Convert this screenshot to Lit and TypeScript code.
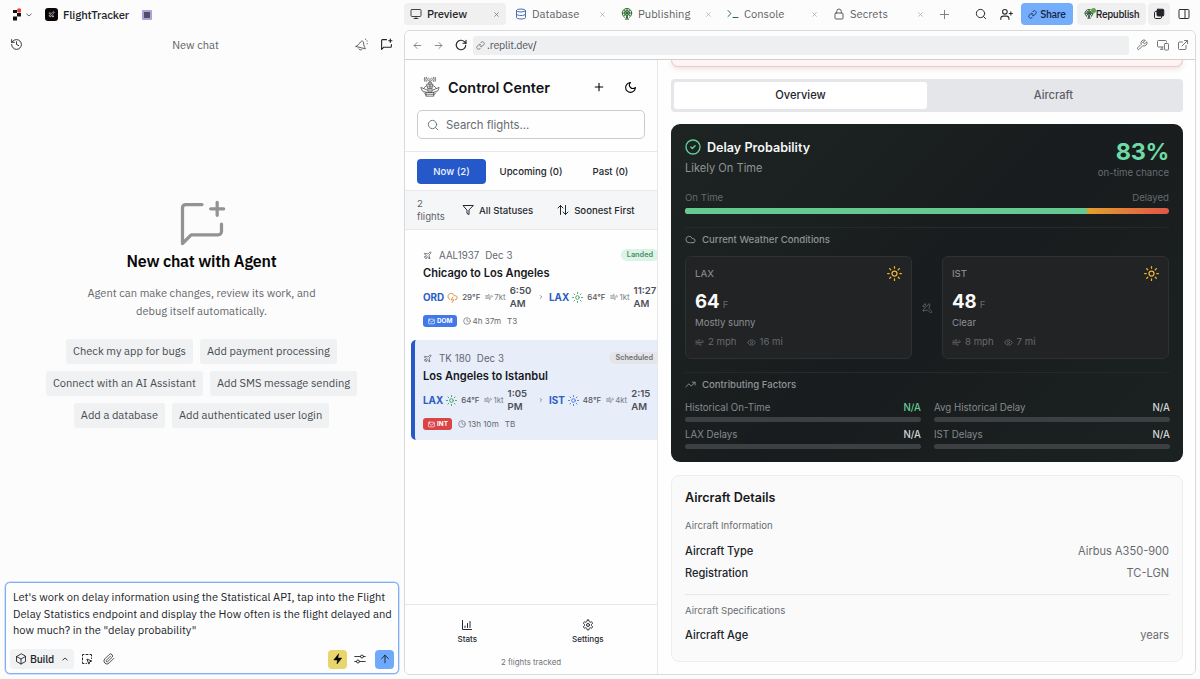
import { LitElement, html, css, svg } from "lit";
import { customElement, property } from "lit/decorators.js";
import { classMap } from "lit/directives/class-map.js";

const PLANE = svg`<path d="M17.8 19.2 16 11l3.5-3.5C21 6 21.5 4 21 3c-1-.5-3 0-4.5 1.5L13 8 4.8 6.2c-.5-.1-.9.1-1.1.5l-.3.5c-.2.5-.1 1 .3 1.3L9 12l-2 3H4l-1 1 3 2 2 3 1-1v-3l3-2 3.5 5.3c.3.4.8.5 1.3.3l.5-.2c.4-.3.6-.7.5-1.2z"/>`;

const ICONS: Record<string, unknown> = {
  plane: PLANE,
  planeTurned: svg`<g transform="rotate(90 12 12)">${PLANE}</g>`,
  chevronDown: svg`<path d="m3 8 9 8 9-8"/>`,
  chevronUp: svg`<path d="m3 16 9-8 9 8"/>`,
  chevronRight: svg`<path d="m9 18 6-6-6-6"/>`,
  history: svg`<path d="M3 12a9 9 0 1 0 9-9 9.75 9.75 0 0 0-6.74 2.74L3 8"/><path d="M3 3v5h5"/><path d="M12 7v5l4 2"/>`,
  bell: svg`<g transform="rotate(14 12 12)"><path d="M3 18h18c-2.500-3-4.500-4.500-6-10-.6-3.200-5.400-3.200-6 0-1.500 5.500-3.500 7-6 10z"/><path d="M9 21c1.500 1.800 4.500 1.800 6 0"/></g><path d="M19.500 2v.8M22.500 5.500h-.8M22.500 10v.8" />`,
  chatPlus: svg`<path d="M12 3H4.500A1.500 1.500 0 0 0 3 4.500V21l4-4h12.500a1.500 1.500 0 0 0 1.500-1.500V12"/><path d="M19 2v6M16 5h6"/>`,
  monitor: svg`<rect x="2" y="3" width="20" height="14" rx="2"/><path d="M8 21h8M12 17v4"/>`,
  x: svg`<path d="M3 3l18 18M21 3 3 21"/>`,
  plus: svg`<path d="M3 12h18M12 3v18"/>`,
  database: svg`<ellipse cx="12" cy="5" rx="9" ry="3"/><path d="M3 5v14c0 1.700 4 3 9 3s9-1.300 9-3V5"/><path d="M3 12c0 1.700 4 3 9 3s9-1.300 9-3"/>`,
  tower: svg`<path d="M7 18.500a9.500 9.500 0 1 1 10 0"/><circle cx="12" cy="10" r="5"/><path d="M12 2v21M2.500 10h19M6 4.500l12 11M18 4.500l-12 11M9.500 23l2.500-7 2.500 7"/>`,
  terminal: svg`<path d="m2 17 6-6-6-6M12 19h10"/>`,
  lock: svg`<rect x="4" y="10" width="16" height="12" rx="2"/><path d="M7.500 10V6.500a4.500 4.500 0 0 1 9 0V10"/>`,
  search: svg`<circle cx="11" cy="11" r="8.300"/><path d="m21.500 21.500-4.500-4.500"/>`,
  userPlus: svg`<circle cx="9" cy="7" r="4.300"/><path d="M1.500 21v-1.500A4.500 4.500 0 0 1 6 15h6a4.500 4.500 0 0 1 4.500 4.500V21M20 7v6M17 10h6"/>`,
  link: svg`<path d="M10 13a5 5 0 0 0 7.540.540l3-3a5 5 0 0 0-7.070-7.070l-1.720 1.710"/><path d="M14 11a5 5 0 0 0-7.540-.540l-3 3a5 5 0 0 0 7.070 7.070l1.710-1.710"/>`,
  copies: svg`<path d="M7 7H5.500A2.500 2.500 0 0 0 3 9.500v9A2.500 2.500 0 0 0 5.500 21h9a2.500 2.500 0 0 0 2.500-2.500V17"/><rect x="8" y="2.500" width="13.500" height="13.500" rx="2" fill="currentColor"/>`,
  panel: svg`<rect x="2" y="3" width="20" height="18" rx="2"/><path d="M14 3v18"/>`,
  back: svg`<path d="M21 12H3m8-8-8 8 8 8"/>`,
  forward: svg`<path d="M3 12h18m-8-8 8 8-8 8"/>`,
  reload: svg`<path d="M21.500 12.500a9.500 9.500 0 1 1-2.800-7.200L22 8.500"/><path d="M22 2.500v6h-6"/>`,
  wrench: svg`<path d="M14.700 6.300a1 1 0 0 0 0 1.400l1.600 1.600a1 1 0 0 0 1.400 0l3.770-3.770a6 6 0 0 1-7.940 7.940l-6.910 6.910a2.120 2.120 0 0 1-3-3l6.910-6.910a6 6 0 0 1 7.940-7.940l-3.760 3.760z"/>`,
  devices: svg`<path d="M12 16H3a2 2 0 0 1-2-2V5a2 2 0 0 1 2-2h14a2 2 0 0 1 2 2v1M7 20.500h5M10 16v4"/><rect x="15" y="9" width="8" height="13" rx="1.500"/>`,
  external: svg`<path d="M15 3h6v6M10 14 21 3M18 13v6a2 2 0 0 1-2 2H5a2 2 0 0 1-2-2V8a2 2 0 0 1 2-2h6"/>`,
  cube: svg`<path d="M12 2 3 7v10l9 5 9-5V7z"/><path d="m3 7 9 5 9-5M12 12v10"/>`,
  select: svg`<path d="M3 6V3h3M18 3h3v3M3 18v3h3M10 3h4M3 10v4M21 10v1M10 21h1"/><path d="m12.500 12.500 9 3.500-4 1.500-1.500 4z"/>`,
  clip: svg`<path d="m21.400 11-9.200 9.200a6 6 0 0 1-8.500-8.500l8.600-8.600a4 4 0 0 1 5.700 5.700l-8.600 8.600a2 2 0 0 1-2.800-2.800l8.500-8.500"/>`,
  bolt: svg`<path fill="currentColor" d="M13 2 3.500 14H11l-1 8 9.500-12H12z"/>`,
  sliders: svg`<path d="M1.500 7H13M19 7h3.500M1.500 17H5M11 17h11.500"/><circle cx="16" cy="7" r="3"/><circle cx="8" cy="17" r="3"/>`,
  up: svg`<path d="M12 21V3m-8 8 8-8 8 8"/>`,
  moon: svg`<path d="M12 3a6 6 0 0 0 9 9 9 9 0 1 1-9-9Z"/>`,
  filter: svg`<path d="M22 3H2l8 9.460V19l4 2v-8.540z"/>`,
  sort: svg`<path d="m2 8 5-5 5 5M7 3v18M12 16l5 5 5-5M17 21V3"/>`,
  storm: svg`<path d="M6 16.300A7 7 0 1 1 15.700 8h1.800a4.500 4.500 0 0 1 .5 9"/><path d="m13 11-4 6h6l-4 6"/>`,
  sun: svg`<circle cx="12" cy="12" r="4"/><path d="M12 1v2.500M12 20.500V23M4.200 4.200 6 6M18 18l1.800 1.800M1 12h2.500M20.500 12H23M6 18l-1.800 1.800M19.800 4.200 18 6"/>`,
  wind: svg`<path d="M12.800 19.600A2 2 0 1 0 14 16H2M17.500 8a2.500 2.500 0 1 1 2 4H2M9.800 4.400A2 2 0 1 1 11 8H2"/>`,
  mail: svg`<rect x="2" y="4" width="20" height="16" rx="2"/><path d="m4 8 8 6 8-6"/>`,
  clock: svg`<circle cx="12" cy="12" r="10"/><path d="M12 6v6l4 2"/>`,
  chart: svg`<path d="M3 3v18h18M8 17v-3M13 17V9M18 17V5"/>`,
  gear: svg`<path d="M12.220 2h-.440a2 2 0 0 0-2 2v.180a2 2 0 0 1-1 1.730l-.430.250a2 2 0 0 1-2 0l-.150-.080a2 2 0 0 0-2.730.730l-.220.380a2 2 0 0 0 .730 2.730l.150.100a2 2 0 0 1 1 1.720v.510a2 2 0 0 1-1 1.740l-.150.090a2 2 0 0 0-.730 2.730l.220.380a2 2 0 0 0 2.730.730l.150-.080a2 2 0 0 1 2 0l.430.250a2 2 0 0 1 1 1.730V20a2 2 0 0 0 2 2h.440a2 2 0 0 0 2-2v-.180a2 2 0 0 1 1-1.730l.430-.250a2 2 0 0 1 2 0l.150.080a2 2 0 0 0 2.730-.730l.220-.390a2 2 0 0 0-.730-2.730l-.150-.080a2 2 0 0 1-1-1.740v-.500a2 2 0 0 1 1-1.740l.150-.090a2 2 0 0 0 .730-2.730l-.220-.380a2 2 0 0 0-2.730-.730l-.150.080a2 2 0 0 1-2 0l-.430-.250a2 2 0 0 1-1-1.730V4a2 2 0 0 0-2-2z"/><circle cx="12" cy="12" r="3"/>`,
  check: svg`<circle cx="12" cy="12" r="10.500"/><path d="m8.800 12 2.200 2.200 4.200-4.200"/>`,
  cloud: svg`<path d="M17.500 19H9a7 7 0 1 1 6.710-9h1.790a4.500 4.500 0 1 1 0 9Z"/>`,
  eye: svg`<path d="M2 12.300a1 1 0 0 1 0-.7 10.750 10.750 0 0 1 20 0 1 1 0 0 1 0 .7 10.750 10.750 0 0 1-20 0"/><circle cx="12" cy="12" r="3"/>`,
  trend: svg`<path d="m22 7-8.500 8.500-5-5L2 17"/><path d="M16 7h6v6"/>`,
  crest: svg`<path d="M8.500 8.500h7l-1.200 5H9.700zM9.700 13.500v5h4.600v-5M10.500 8.500V6h3v2.500M12 6V2M12 9v9M10.300 11h3.400M7.500 18.500h9v4.500h-9zM7.500 20.700h9"/><path d="M8 10.500a7 7 0 0 0-3.500 3M16 10.500a7 7 0 0 1 3.500 3M5 19a8 8 0 0 0 2.500 2.500M19 19a8 8 0 0 1-2.500 2.500M9.500 16 1 12.500l1.500 4L8 18.500M14.500 16l8.500-3.500-1.500 4L16 18.500"/><path d="M9.800 1.200a2.500 2.500 0 0 0 0 3.300M7.800.3a4 4 0 0 0 0 5M5.800.3a5 5 0 0 0 0 5M14.200 1.200a2.500 2.500 0 0 1 0 3.300M16.200.3a4 4 0 0 1 0 5M18.200.3a5 5 0 0 1 0 5"/>`,
};

const icon = (name: string, size: number, stroke = 2, cls = "") => svg`
  <svg class="icon ${cls}" width=${size} height=${size} viewBox="0 0 24 24" fill="none"
    stroke="currentColor" stroke-width=${stroke} stroke-linecap="round" stroke-linejoin="round">${ICONS[name]}</svg>`;

const base = css`
  :host { box-sizing: border-box; }
  *, *::before, *::after { box-sizing: border-box; }
  .icon { display: block; flex: none; overflow: visible; }
`;

@customElement("chat-panel")
class ChatPanel extends LitElement {
  static styles = [base, css`
    :host { display: flex; flex-direction: column; width: 404px; height: 679px; padding: 0 5px 5px;
      font-family: "IBM Plex Sans", "Noto Sans", sans-serif; color: #25272b; }
    .brand { height: 29px; display: flex; align-items: center; padding-left: 7px; }
    .logo { width: 9px; height: 13px; }
    .caret { margin-left: 5px; color: #555; }
    .app { width: 13px; height: 13px; border-radius: 3px; background: #0a0506; color: #e9dcdc;
      display: flex; align-items: center; justify-content: center; margin: 0 5px 0 13px; }
    .name { font-size: 11.300px; font-weight: 500; letter-spacing: -0.150px; width: 79px; white-space: nowrap; }
    .chip { width: 10px; height: 10px; border: 2px solid #aaa2dc; background: #514d69; border-radius: 1px; }
    .head { height: 31px; display: grid; grid-template-columns: 60px 1fr 72px; align-items: center;
      padding: 0 6px 0 5px; font-size: 11.100px; color: #5f6267; text-align: center; }
    .history { color: #333; }
    .actions { display: flex; justify-content: flex-end; gap: 12px; color: #555; }
    .dark { color: #222; }
    .empty { flex: 1; display: flex; flex-direction: column; align-items: center; padding-top: 138px; padding-right: 1px; }
    .big { color: #929394; margin-left: 1px; }
    h1 { margin: 0; font-size: 16px; line-height: 22px; font-weight: 600; letter-spacing: -0.200px; color: #080808; }
    p { margin: 12px 0 0; font-size: 11.100px; line-height: 18px; color: #64676c; text-align: center; width: 246px; }
    .chips { display: flex; flex-wrap: wrap; justify-content: center; gap: 7px; margin-top: 19px; width: 330px; }
    .suggest { height: 25px; padding: 0 7px; border-radius: 3px; background: #f0f1f2; color: #484b50;
      font-size: 11.100px; line-height: 25px; white-space: nowrap; }
    .prompt { height: 92px; width: 394px; border: 1px solid #80aef5; border-radius: 5px; background: #fdfdfd;
      padding: 6px 4px 4px; display: flex; flex-direction: column; justify-content: space-between; box-shadow: 0 0 0 .5px #a9c8f8; }
    .typed { font-size: 11.160px; line-height: 16.500px; color: #222428; padding-left: 3px; white-space: pre; }
    .tools { display: flex; align-items: center; height: 20px; }
    .build { height: 20px; width: 64px; background: #f1f2f4; border-radius: 4px; display: flex; align-items: center;
      padding: 0 6px 0 5px; font-size: 10.500px; font-weight: 500; gap: 3px; letter-spacing: -.2px; }
    .push { margin-left: auto; }
    .sel { margin: 0 10px 0 7px; }
    .sq { width: 19px; height: 19px; border-radius: 4px; display: flex; align-items: center; justify-content: center; }
    .gold { background: #e8d66c; color: #000; margin-left: auto; margin-right: 7px; }
    .blue { background: #6ea9fb; color: #112; margin-left: 9px; }
  `];
  private suggestions = ["Check my app for bugs", "Add payment processing", "Connect with an AI Assistant",
    "Add SMS message sending", "Add a database", "Add authenticated user login"];
  render() {
    return html`
      <div class="brand">
        <svg class="logo" viewBox="0 0 9 13"><path d="M1 2h4v3H1zM5 5h4v3.500H5zM1 8.500h4v4H1z" fill="#111"/><circle cx="7.200" cy="2.500" r="2.200" fill="#e5484d"/></svg>
        <span class="caret">${icon("chevronDown", 6, 3.500)}</span>
        <span class="app">${icon("plane", 7, 2.200)}</span>
        <span class="name">FlightTracker</span><span class="chip"></span>
      </div>
      <div class="head">
        <span class="history">${icon("history", 13, 1.800)}</span><span>New chat</span>
        <span class="actions">${icon("bell", 13, 1.600)}${icon("chatPlus", 13, 2, "dark")}</span>
      </div>
      <div class="empty">
        <span class="big">${icon("chatPlus", 52, 1.500)}</span>
        <h1>New chat with Agent</h1>
        <p>Agent can make changes, review its work, and debug itself automatically.</p>
        <div class="chips">${this.suggestions.map((s) => html`<span class="suggest">${s}</span>`)}</div>
      </div>
      <div class="prompt">
        <div class="typed">${"Let's work on delay information using the Statistical API, tap into the Flight\nDelay Statistics endpoint and display the How often is the flight delayed and\nhow much? in the \"delay probability\""}</div>
        <div class="tools">
          <span class="build">${icon("cube", 12, 1.800)}<span>Build</span><span class="push">${icon("chevronUp", 6, 3.500)}</span></span>
          <span class="sel">${icon("select", 12, 2)}</span>${icon("clip", 12, 1.600)}
          <span class="sq gold">${icon("bolt", 12, 1)}</span>${icon("sliders", 12, 1.800)}
          <span class="sq blue">${icon("up", 10, 2)}</span>
        </div>
      </div>`;
  }
}

@customElement("workspace-tabs")
class WorkspaceTabs extends LitElement {
  static styles = [base, css`
    :host { display: flex; align-items: center; height: 28px; width: 792px; padding-right: 6px; font-family: "IBM Plex Sans", "Noto Sans", sans-serif;
      font-size: 11.200px; color: #5c5f64; }
    .tab { display: flex; align-items: center; width: 106px; height: 22px; padding: 0 11px 0 5px; gap: 5px; border-radius: 4px; flex: none; }
    .on { background: #f0f0f1; color: #26282c; font-weight: 500; width: 102px; margin-right: 4px; padding: 0 7px 0 6px; letter-spacing: -.15px; }
    .close { margin-left: auto; color: #a0a3a7; }
    .on .close { color: #666; }
    .mono { color: #444; } .dbs { color: #4a6fae; } .pub { color: #2d6b35; }
    .add { width: 11px; margin-left: 5px; color: #777; }
    .end { margin-left: auto; display: flex; align-items: center; color: #2c2e33; }
    .btn { height: 22px; border-radius: 4px; display: flex; align-items: center; justify-content: center; font-size: 10.200px;
      font-weight: 500; gap: 3px; background: #f0f0f1; color: #222428; letter-spacing: -0.350px; }
    .share { width: 52px; background: #74adfb; margin: 0 4px 0 8px; color: #14284a; }
    .repub { width: 69px; margin-right: 2px; gap: 2px; }
    .stack { width: 22px; margin-right: 8px; }
    .live { position: relative; display: block; color: #234d28; }
    .live::after { content: ""; position: absolute; right: -2px; top: -1px; width: 5px; height: 5px; border-radius: 50%; background: #58a84b; }
    .user { margin-left: 13px; }
  `];
  render() {
    const tabs = [["monitor", "Preview", "mono"], ["database", "Database", "dbs"], ["tower", "Publishing", "pub"],
      ["terminal", "Console", "pub"], ["lock", "Secrets", ""]];
    return html`
      ${tabs.map(([i, label, tone], n) => html`<div class=${classMap({ tab: true, on: n === 0 })}>
        <span class=${tone || "plain"}>${icon(i, 12, 2)}</span><span>${label}</span><span class="close">${icon("x", 5, 3.200)}</span></div>`)}
      <span class="add">${icon("plus", 11, 2)}</span>
      <div class="end">
        ${icon("search", 12, 2)}<span class="user">${icon("userPlus", 13, 2)}</span>
        <span class="btn share">${icon("link", 9, 2)}Share</span>
        <span class="btn repub"><span class="live">${icon("tower", 10, 2)}</span>Republish</span>
        <span class="btn stack">${icon("copies", 12, 2)}</span>
        ${icon("panel", 12, 2)}
      </div>`;
  }
}

interface Leg { code: string; sky: string; tone: string; temp: string; wind: string; time: string; half: string; }
interface Flight { no: string; title: string; status: string; kind: string; duration: string; terminal: string; legs: Leg[]; active: boolean; }

const FLIGHTS: Flight[] = [
  { no: "AAL1937", title: "Chicago to Los Angeles", status: "Landed", kind: "DOM", duration: "4h 37m", terminal: "T3", active: false,
    legs: [{ code: "ORD", sky: "storm", tone: "orange", temp: "29°F", wind: "7kt", time: "6:50", half: "AM" },
      { code: "LAX", sky: "sun", tone: "green", temp: "64°F", wind: "1kt", time: "11:27", half: "AM" }] },
  { no: "TK 180", title: "Los Angeles to Istanbul", status: "Scheduled", kind: "INT", duration: "13h 10m", terminal: "TB", active: true,
    legs: [{ code: "LAX", sky: "sun", tone: "green", temp: "64°F", wind: "1kt", time: "1:05", half: "PM" },
      { code: "IST", sky: "sun", tone: "blue", temp: "48°F", wind: "4kt", time: "2:15", half: "AM" }] },
];

@customElement("flight-card")
class FlightCard extends LitElement {
  @property({ attribute: false }) flight!: Flight;
  static styles = [base, css`
    :host { display: block; }
    .card { height: 100px; margin: 0 -10px 3px 6px; padding: 9px 0 0 8px; border-left: 4px solid transparent; border-radius: 5px; white-space: nowrap; }
    .active { background: #e7edf9; border-left-color: #2759c9; }
    .meta { display: flex; align-items: center; height: 18px; font-size: 9.700px; color: #63676d; letter-spacing: .05px; }
    .meta .no { margin: 0 6px 0 7px; }
    .badge { margin-left: auto; margin-right: 8px; height: 12px; line-height: 12px; border-radius: 6px; padding: 0 6px 0 6px; font-size: 7.300px; font-weight: 600; letter-spacing: 0; }
    .landed { background: #dcf3e5; color: #45906a; }
    .scheduled { background: #e4e5e9; color: #6c6f75; }
    h3 { margin: 0; font-size: 11.100px; line-height: 18px; font-weight: 600; color: #15181d; }
    .route { display: flex; height: 28px; align-items: center; margin-top: 1px; }
    .leg { display: flex; align-items: center; width: 115px; }
    .code { font-size: 9.900px; font-weight: 700; color: #2c5cc4; margin-right: 3px; }
    .orange { color: #de8a3a; } .green { color: #3f9f62; } .blue { color: #4278e6; }
    .temp { font-size: 7.900px; font-weight: 500; color: #555960; margin: 0 5px 0 4px; }
    .wind { display: flex; align-items: center; gap: 1px; font-size: 7.900px; color: #777b82; }
    .time { font-size: 9.600px; line-height: 13px; font-weight: 600; color: #4d5157; margin-left: 4px; }
    .next { width: 11px; color: #555; }
    .foot { display: flex; align-items: center; height: 12px; font-size: 8.100px; color: #666a70; margin-top: 4px; }
    .kind { display: flex; align-items: center; gap: 2px; height: 12px; border-radius: 3px; padding: 0 4px 0 5px; color: #fff; font-size: 6.400px; font-weight: 700; margin-right: 6px; }
    .dom { background: #4278e8; } .int { background: #d94445; }
    .dur { margin: 0 6px 0 2px; }
  `];
  render() {
    const f = this.flight;
    const leg = (l: Leg) => html`<span class="code">${l.code}</span><span class=${l.tone}>${icon(l.sky, 11, 2)}</span>
      <span class="temp">${l.temp}</span><span class="wind">${icon("wind", 8, 2)}${l.wind}</span><span class="time">${l.time}<br>${l.half}</span>`;
    return html`<div class=${classMap({ card: true, active: f.active })}>
      <div class="meta">${icon("plane", 9, 2.200)}<span class="no">${f.no}</span><span>Dec 3</span>
        <span class="badge ${f.status.toLowerCase()}">${f.status}</span></div>
      <h3>${f.title}</h3>
      <div class="route"><div class="leg">${leg(f.legs[0])}</div><span class="next">${icon("chevronRight", 6, 2.400)}</span><div class="leg">${leg(f.legs[1])}</div></div>
      <div class="foot"><span class="kind ${f.kind.toLowerCase()}">${icon("mail", 7, 2.200)}${f.kind}</span>${icon("clock", 8, 2)}
        <span class="dur">${f.duration}</span><span>${f.terminal}</span></div>
    </div>`;
  }
}

@customElement("flight-sidebar")
class FlightSidebar extends LitElement {
  static styles = [base, css`
    :host { display: flex; flex-direction: column; width: 253px; flex: none; overflow: hidden; background: #fefefe; border-right: 1px solid #e6e7e9; }
    .top { height: 92px; border-bottom: 1px solid #e8e9eb; padding: 14px 12px 0; }
    .title { display: flex; align-items: center; height: 26px; padding: 0 8px 0 3px; }
    h2 { margin: 0 auto 0 8px; font-size: 14.400px; font-weight: 600; color: #101317; white-space: nowrap; }
    .crest { color: #444; }
    .night { margin-left: 20px; }
    .search { margin-top: 10px; height: 29px; border: 1px solid #c9cbce; border-radius: 5px; display: flex; align-items: center; gap: 7px; padding-left: 9px;
      font-size: 11.300px; color: #676b71; }
    .periods { height: 39px; border-bottom: 1px solid #e8e9eb; display: grid; grid-template-columns: 69px 1fr 69px; align-items: center; padding: 0 12px;
      font-size: 9.600px; font-weight: 500; color: #22262b; text-align: center; white-space: nowrap; }
    .now { height: 25px; line-height: 25px; background: #2559c9; color: #eef3ff; border-radius: 4px; }
    .filters { height: 39px; background: #f5f6f8; border-bottom: 1px solid #e8e9eb; display: flex; align-items: center; padding-left: 12px;
      font-size: 9.600px; font-weight: 500; color: #25292e; white-space: nowrap; }
    .count { width: 45px; font-weight: 400; line-height: 13px; color: #5f6369; }
    .label { margin: 0 24px 0 5px; }
    .label.last { margin-right: 0; }
    .list { flex: 1; padding-top: 7px; overflow: hidden; }
    .foot { height: 70px; border-top: 1px solid #e6e7e9; display: flex; flex-direction: column; }
    .nav { display: grid; grid-template-columns: 1fr 1fr; height: 50px; padding: 14px 9px 0 2px; }
    .item { display: flex; flex-direction: column; align-items: center; font-size: 8.100px; font-weight: 500; line-height: 12px; color: #25292e; gap: 2px; }
    .tracked { text-align: center; font-size: 7.900px; line-height: 12px; color: #6f7379; margin-top: 1px; }
  `];
  render() {
    return html`
      <div class="top">
        <div class="title"><span class="crest">${icon("crest", 20, .9)}</span><h2>Control Center</h2>${icon("plus", 10, 2.600)}<span class="night">${icon("moon", 13, 2)}</span></div>
        <div class="search">${icon("search", 12, 1.800)}<span>Search flights...</span></div>
      </div>
      <div class="periods"><span class="now">Now (2)</span><span>Upcoming (0)</span><span>Past (0)</span></div>
      <div class="filters"><span class="count">2<br>flights</span>${icon("filter", 12, 2)}<span class="label">All Statuses</span>${icon("sort", 12, 2)}<span class="label last">Soonest First</span></div>
      <div class="list">${FLIGHTS.map((f) => html`<flight-card .flight=${f}></flight-card>`)}</div>
      <div class="foot">
        <div class="nav"><span class="item">${icon("chart", 12, 2)}Stats</span><span class="item">${icon("gear", 12, 2)}Settings</span></div>
        <div class="tracked">2 flights tracked</div>
      </div>`;
  }
}

@customElement("flight-detail")
class FlightDetail extends LitElement {
  static styles = [base, css`
    :host { display: block; flex: 1; min-width: 0; height: 614px; overflow: hidden; padding: 0 12px 0 13px; background: #fefefe; }
    .alert { height: 7px; border: 1px solid #f3c6c4; border-top: 0; border-radius: 0 0 8px 8px; background: #fef4f3; box-shadow: 0 2px 5px rgba(120, 60, 60, .14); }
    .switch { margin-top: 12px; height: 33px; background: #e5e6ea; border-radius: 4px; padding: 3px; display: grid; grid-template-columns: 1fr 1fr; text-align: center;
      font-size: 11.100px; font-weight: 500; line-height: 27px; color: #5c6067; }
    .sel { background: #fff; border-radius: 3px; color: #22252a; }
    .prob { margin-top: 12px; height: 338px; border-radius: 9px; background: linear-gradient(135deg, #1d2422, #191c1e 50%, #1b2120); padding: 13px 14px 0; color: #8d9093; overflow: hidden; }
    .hero { display: flex; justify-content: space-between; height: 54px; }
    .title { display: flex; align-items: center; gap: 6px; height: 20px; font-size: 12.600px; font-weight: 600; color: #f6f7f7; }
    .ok { color: #5fcf98; }
    .likely { font-size: 11.100px; line-height: 16px; margin-top: 3px; color: #8f9395; }
    .score { text-align: right; }
    .pct { font-size: 23.400px; font-weight: 700; line-height: 30px; color: #6ddba5; letter-spacing: -.3px; }
    .chance { font-size: 9.600px; line-height: 12px; color: #686c6f; }
    .ends { display: flex; justify-content: space-between; font-size: 9.600px; line-height: 14px; color: #666a6d; }
    .bar { height: 6px; margin-top: 3px; border-radius: 3px; overflow: hidden; background: linear-gradient(90deg, #e3a02e 83%, #e05548 100%); }
    .fill { height: 100%; background: #65c992; }
    .sect { border-top: 1px solid #25292a; margin-top: 13px; padding-top: 1px; display: flex; align-items: center; height: 23px; gap: 6px; font-size: 9.600px; font-weight: 500; color: #8f9396; }
    .wx { display: grid; grid-template-columns: 227px 1fr 227px; align-items: center; margin-top: 6px; color: #5b5f61; }
    .wx > .icon { justify-self: center; }
    .place { height: 103px; border: 1px solid #2e3133; border-radius: 6px; background: #212324; padding: 8px 9px 0; }
    .row { display: flex; justify-content: space-between; align-items: center; height: 17px; font-size: 9.600px; font-weight: 500; color: #85898c; }
    .gold { color: #ecb632; }
    .temp { display: flex; align-items: baseline; gap: 3px; font-size: 18.600px; line-height: 26px; height: 26px; font-weight: 700; color: #fafafa; margin-top: 6px; }
    .unit { font-size: 9.600px; font-weight: 400; color: #66696b; }
    .cond { font-size: 9.600px; line-height: 14px; color: #8c9092; margin-top: 2px; }
    .air { display: flex; align-items: center; gap: 4px; font-size: 9.600px; line-height: 14px; height: 14px; color: #686c6f; margin-top: 5px; }
    .air .vis { margin-left: 6px; }
    .factors { display: grid; grid-template-columns: 236px 236px; column-gap: 13px; row-gap: 5px; margin-top: 5px; }
    .factor { font-size: 9.700px; color: #85898c; height: 22px; }
    .line { display: flex; justify-content: space-between; line-height: 15px; font-weight: 400; }
    .val { color: #d4d6d7; font-weight: 500; }
    .val.good { color: #62cd94; }
    .track { height: 5px; border-radius: 3px; background: #3d4043; margin-top: 2px; }
    .details { margin-top: 13px; height: 187px; border: 1px solid #eeeeef; border-radius: 8px; background: #fafafa; padding: 12px 13px 0; }
    h3 { margin: 0; font-size: 12.600px; line-height: 20px; font-weight: 600; color: #17191d; }
    .sub { font-size: 9.600px; line-height: 14px; color: #696d73; margin-top: 11px; }
    .spec { display: flex; justify-content: space-between; font-size: 11.050px; line-height: 22.500px; color: #676b70; }
    .spec b { font-weight: 500; color: #212429; }
    .first { margin-top: 6.500px; }
    .rule { border-top: 1px solid #e6e7e8; margin-top: 9px; }
    .rule + .sub { margin-top: 9px; }
  `];
  render() {
    const place = (code: string, t: string, cond: string, wind: string, vis: string) => html`<div class="place">
      <div class="row">${code}<span class="gold">${icon("sun", 15, 2)}</span></div>
      <div class="temp">${t}<span class="unit">F</span></div><div class="cond">${cond}</div>
      <div class="air">${icon("wind", 9, 2)}${wind}<span class="vis">${icon("eye", 9, 2)}</span>${vis}</div></div>`;
    const factors: [string, boolean][] = [["Historical On-Time", true], ["Avg Historical Delay", false], ["LAX Delays", false], ["IST Delays", false]];
    return html`
      <div class="alert"></div>
      <div class="switch"><span class="sel">Overview</span><span>Aircraft</span></div>
      <section class="prob">
        <div class="hero">
          <div><div class="title"><span class="ok">${icon("check", 16, 2)}</span>Delay Probability</div><div class="likely">Likely On Time</div></div>
          <div class="score"><div class="pct">83%</div><div class="chance">on-time chance</div></div>
        </div>
        <div class="ends"><span>On Time</span><span>Delayed</span></div>
        <div class="bar"><div class="fill" style="width:83%"></div></div>
        <div class="sect">${icon("cloud", 11, 2)}Current Weather Conditions</div>
        <div class="wx">${place("LAX", "64", "Mostly sunny", "2 mph", "16 mi")}${icon("planeTurned", 12, 1.800)}${place("IST", "48", "Clear", "8 mph", "7 mi")}</div>
        <div class="sect">${icon("trend", 11, 2)}Contributing Factors</div>
        <div class="factors">${factors.map(([label, good]) => html`<div class="factor">
          <div class="line"><span>${label}</span><span class=${classMap({ val: true, good })}>N/A</span></div><div class="track"></div></div>`)}</div>
      </section>
      <section class="details">
        <h3>Aircraft Details</h3>
        <div class="sub">Aircraft Information</div>
        <div class="spec first"><b>Aircraft Type</b><span>Airbus A350-900</span></div>
        <div class="spec"><b>Registration</b><span>TC-LGN</span></div>
        <div class="rule"></div>
        <div class="sub">Aircraft Specifications</div>
        <div class="spec first"><b>Aircraft Age</b><span>years</span></div>
      </section>`;
  }
}

@customElement("app-root")
class AppRoot extends LitElement {
  static styles = [base, css`
    :host { display: flex; width: 1200px; height: 679px; overflow: hidden; background: #fcfcfc; font-family: Inter, sans-serif; }
    .frame { width: 792px; height: 645px; margin-top: 2px; border: 1px solid #d9dadc; border-radius: 6px; overflow: hidden; background: #fefefe; display: flex; flex-direction: column; }
    .address { height: 29px; flex: none; border-bottom: 1px solid #cfd0d2; display: flex; align-items: center; padding: 0 6px 0 8px; color: #666; background: #fdfdfd; }
    .fwd { margin-left: 12px; }
    .reload { margin: 0 6px 0 12px; color: #222; }
    .url { flex: 1; height: 19px; border-radius: 3px; background: #eeeff1; display: flex; align-items: center; gap: 2px; padding-left: 3px;
      font-family: "IBM Plex Sans", "Noto Sans", sans-serif; font-size: 10.700px; color: #55585d; margin-right: 7px; letter-spacing: -.2px; }
    .slash { color: #222; }
    .side { display: flex; gap: 8.500px; color: #666; }
    .body { flex: 1; display: flex; min-height: 0; }
  `];
  render() {
    return html`<chat-panel></chat-panel>
      <div><workspace-tabs></workspace-tabs>
        <div class="frame">
          <div class="address">${icon("back", 9, 2)}<span class="fwd">${icon("forward", 9, 2)}</span><span class="reload">${icon("reload", 12, 2.200)}</span>
            <div class="url">${icon("link", 9, 1.800)}<span>.replit.dev<span class="slash">/</span></span></div>
            <div class="side">${icon("wrench", 12, 1.800)}${icon("devices", 12, 1.800)}${icon("external", 12, 1.800)}</div></div>
          <div class="body"><flight-sidebar></flight-sidebar><flight-detail></flight-detail></div>
        </div></div>`;
  }
}
